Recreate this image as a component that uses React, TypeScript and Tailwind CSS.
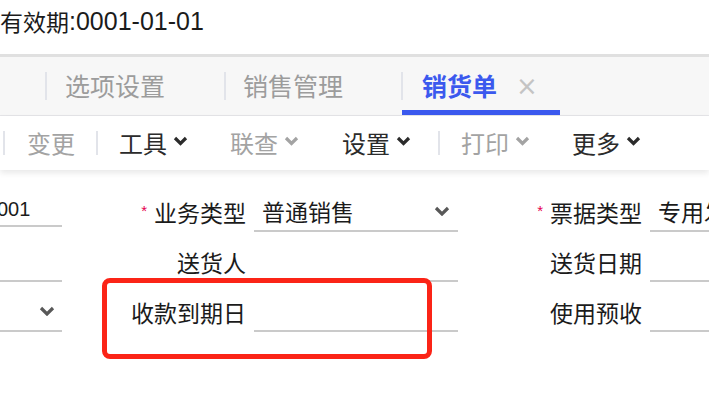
import React from 'react';

const Chevron = ({ dark = true }: { dark?: boolean }) => (
    <svg width="15" height="10" viewBox="0 0 15 10" className="ml-[6px] mt-[-4px] shrink-0">
        <polyline
            points="2,2 7.5,7.5 13,2"
            fill="none"
            stroke={dark ? '#2b2b2b' : '#a3a3a3'}
            strokeWidth="3.2"
        />
    </svg>
);

const SelectChevron = () => (
    <svg width="16" height="10" viewBox="0 0 16 10" className="shrink-0">
        <polyline points="2,2 8,8 14,2" fill="none" stroke="#585858" strokeWidth="3.2" />
    </svg>
);

const Sep = ({ h = 'h-[28px]' }: { h?: string }) => (
    <div className={`w-[2px] ${h} bg-[#e2e4ea] shrink-0`} />
);

const Star = () => (
    <span className="text-[#e5004f] text-[15px] leading-none mr-[7px] mb-[4px] font-['Liberation_Sans',sans-serif]">*</span>
);

interface Field {
    label: string;
    required?: boolean;
    value?: string;
    select?: boolean;
}

const rows: Field[][] = [
    [
        { label: '业务类型', required: true, value: '普通销售', select: true },
        { label: '票据类型', required: true, value: '专用发票', select: true },
    ],
    [{ label: '送货人' }, { label: '送货日期' }],
    [{ label: '收款到期日' }, { label: '使用预收' }],
];

const FormCol = ({ f }: { f: Field }) => (
    <div className="w-[396px] shrink-0 flex items-center">
        <div className="w-[184px] h-[40px] shrink-0 flex items-center justify-end">
            {f.required && <Star />}
            <span className="text-[23px] leading-none whitespace-nowrap">{f.label}</span>
        </div>
        <div className="ml-[8px] w-[204px] h-[40px] shrink-0 border-b-2 border-[#cacaca] flex items-center justify-between pl-[8px] pr-[8px] overflow-hidden">
            <span className="text-[23px] leading-none whitespace-nowrap">{f.value}</span>
            {f.select && <SelectChevron />}
        </div>
    </div>
);

export default function App() {
    const leftCells = [
        <div className="w-[62px] h-[35px] mb-[5px] shrink-0 border-b-2 border-[#cacaca] flex items-center overflow-hidden">
            <span className="ml-[-3px] text-[20px] leading-none font-['Liberation_Sans',sans-serif]">001</span>
        </div>,
        <div className="w-[62px] h-[40px] shrink-0 border-b-2 border-[#cacaca]" />,
        <div className="w-[62px] h-[40px] shrink-0 border-b-2 border-[#cacaca] flex items-center justify-end pr-[7px]">
            <SelectChevron />
        </div>,
    ];

    return (
        <div className="w-[709px] h-[409px] bg-white overflow-hidden relative text-[#1b1b1b] font-['Noto_Sans_CJK_SC',sans-serif]">
            {/* validity */}
            <div className="h-[54px] flex items-start pt-[6px] whitespace-nowrap">
                <span className="text-[23px] leading-[30px]">有效期</span>
                <span className="text-[25px] leading-[30px] font-['Liberation_Sans',sans-serif]">:0001-01-01</span>
            </div>
            <div className="h-[3px] bg-[#e0e0e0]" />

            {/* tabs */}
            <div className="h-[59px] bg-[#f7f7f7] border-b border-[#e5e5e8] flex items-stretch pl-[45px]">
                <div className="w-[179px] shrink-0 flex items-center">
                    <Sep />
                    <span className="ml-[18px] text-[25px] text-[#9c9c9c]">选项设置</span>
                </div>
                <div className="w-[177px] shrink-0 flex items-center">
                    <Sep />
                    <span className="ml-[17px] text-[25px] text-[#9c9c9c]">销售管理</span>
                </div>
                <div className="flex items-center shrink-0">
                    <Sep />
                    <div className="relative h-full flex items-center pl-[19px] pr-[22px]">
                        <span className="text-[25px] font-bold text-[#3b59ee]">销货单</span>
                        <span className="ml-[19px] text-[26px] leading-none text-[#c4c4c4] font-['DejaVu_Sans',sans-serif]">×</span>
                        <div className="absolute left-[-1px] right-0 bottom-0 h-[5px] bg-[#3b59ee]" />
                    </div>
                </div>
            </div>

            {/* toolbar */}
            <div className="h-[54px] bg-white shadow-[0_3px_6px_rgba(0,0,0,0.09)] flex items-center pl-[3px] text-[24px] relative z-10 whitespace-nowrap">
                <Sep h="h-[24px]" />
                <span className="ml-[22px] text-[#a3a3a3]">变更</span>
                <div className="ml-[21px]"><Sep h="h-[24px]" /></div>
                <span className="ml-[21px] text-[#2b2b2b] flex items-center">工具<Chevron /></span>
                <span className="ml-[42px] text-[#a3a3a3] flex items-center">联查<Chevron dark={false} /></span>
                <span className="ml-[43px] text-[#2b2b2b] flex items-center">设置<Chevron /></span>
                <div className="ml-[27px]"><Sep h="h-[24px]" /></div>
                <span className="ml-[21px] text-[#a3a3a3] flex items-center">打印<Chevron dark={false} /></span>
                <span className="ml-[42px] text-[#2b2b2b] flex items-center">更多<Chevron /></span>
            </div>

            {/* form */}
            <div className="pt-[22px] flex flex-col gap-[10px]">
                {rows.map((r, i) => (
                    <div key={i} className="flex items-end">
                        {leftCells[i]}
                        {r.map((f) => (
                            <FormCol key={f.label} f={f} />
                        ))}
                    </div>
                ))}
            </div>

            {/* annotation */}
            <div className="absolute left-[102px] top-[278px] w-[330px] h-[81px] border-[5px] border-[#fb2417] rounded-[8px]" />
        </div>
    );
}
